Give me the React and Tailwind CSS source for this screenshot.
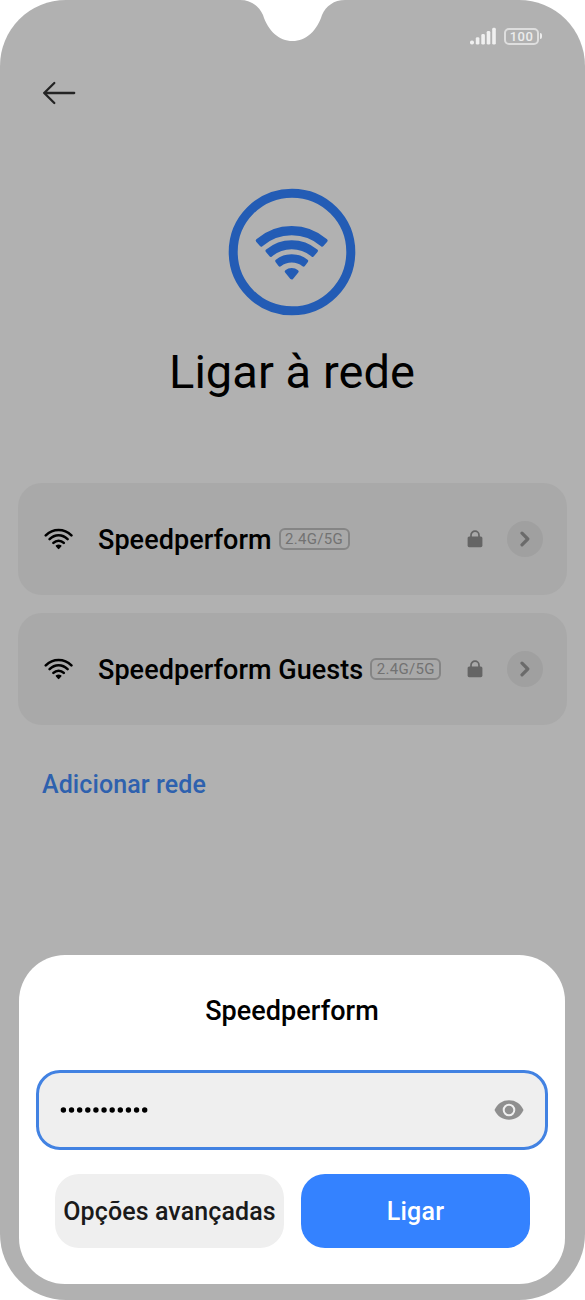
const networks = [
  { name: "Speedperform", band: "2.4G/5G" },
  { name: "Speedperform Guests", band: "2.4G/5G" },
];

// Ring sector opening upwards, symmetric around x = cx
function sector(cx, cy, inner, outer, degrees) {
  const a = (degrees * Math.PI) / 180;
  const s = Math.sin(a);
  const c = Math.cos(a);
  return `M${cx - outer * s} ${cy - outer * c}A${outer} ${outer} 0 0 1 ${cx + outer * s} ${cy - outer * c}L${cx + inner * s} ${cy - inner * c}A${inner} ${inner} 0 0 0 ${cx - inner * s} ${cy - inner * c}Z`;
}

function Notch() {
  return (
    <svg className="absolute top-0 left-[240px]" width="105" height="42" viewBox="0 0 105 42">
      <path
        d="M0 0C11 0 19 6 23 15C28 31 39 41 52.5 41S77 31 82 15C86 6 94 0 105 0Z"
        fill="#fff"
      />
    </svg>
  );
}

function StatusIcons() {
  return (
    <div className="flex items-center gap-2">
      <svg width="26" height="18" viewBox="0 0 26 18" fill="#f0f0f0">
        <rect x="0" y="13.4" width="4" height="4.2" rx="1.8" />
        <rect x="5.8" y="10.2" width="3.6" height="7.4" rx="1.4" />
        <rect x="11.3" y="7.1" width="3.6" height="10.5" rx="1.4" />
        <rect x="16.7" y="3.9" width="3.6" height="13.7" rx="1.4" />
        <rect x="22.2" y="0.8" width="3.6" height="16.8" rx="1.4" />
      </svg>
      <div className="flex items-center gap-px">
        <div className="flex h-[17px] w-[35px] items-center justify-center rounded-[5px] border-2 border-[#dedede] pt-px text-[13px] leading-none font-medium tracking-[0.5px] text-[#ececec]">
          100
        </div>
        <div className="h-[6px] w-[2px] rounded-r-full bg-[#ececec]" />
      </div>
    </div>
  );
}

function WifiBadge() {
  return (
    <svg width="128" height="128" viewBox="0 0 128 128">
      <circle cx="64" cy="64" r="58.8" fill="none" stroke="#235cb5" strokeWidth="9" />
      <g fill="#235cb5" stroke="#235cb5" strokeWidth="3.4" strokeLinejoin="round">
        <path d={sector(63.7, 92, 46.4, 52.2, 41)} />
        <path d={sector(63.7, 92, 32.5, 38.1, 40)} />
        <path d={sector(63.7, 92, 19.2, 24.1, 38)} />
        <path d={sector(63.7, 89.8, 0, 8.2, 40)} />
      </g>
    </svg>
  );
}

function WifiIcon() {
  return (
    <svg width="30" height="22" viewBox="0 0 30 22" fill="none" stroke="#000" strokeWidth="2.6" strokeLinecap="round">
      <path d="M1.8 7.4C9 0.2 20.2 0.2 27.4 7.4" />
      <path d="M5.6 11.2C10.8 6 18.4 6 23.6 11.2" />
      <path d="M9.4 14.9C12.4 12 16.8 12 19.8 14.9" />
      <path d="M12.6 18Q14.6 16.6 16.6 18L14.6 20.2Z" fill="#000" strokeWidth="1.8" strokeLinejoin="round" />
    </svg>
  );
}

function LockIcon() {
  return (
    <svg width="16" height="18" viewBox="0 0 16 18">
      <path d="M4 9V5.2a4 4 0 0 1 8 0V9" fill="none" stroke="#656565" strokeWidth="1.7" />
      <rect x="0.6" y="6.4" width="14.8" height="10.8" rx="1.6" fill="#656565" />
    </svg>
  );
}

function NetworkRow({ name, band }) {
  return (
    <div className="flex h-[112px] items-center rounded-3xl bg-[#a9a9a9] pr-[24px] pl-[26px]">
      <WifiIcon />
      <span className="ml-[24px] pt-[2px] text-[27px] leading-none font-medium tracking-[0.05px] text-black">{name}</span>
      <span className="mb-px ml-[7px] flex h-[22px] w-[71px] items-center justify-center rounded-md border-2 border-[#858585] pt-px text-[15px] leading-none tracking-[0.3px] text-[#727272]">
        {band}
      </span>
      <div className="ml-auto flex items-center gap-[24px]">
        <LockIcon />
        <span className="flex size-9 items-center justify-center rounded-full bg-[#a0a0a0]">
          <svg width="12" height="16" viewBox="0 0 12 16" fill="none" stroke="#6b6b6b" strokeWidth="3.2" strokeLinecap="round" strokeLinejoin="round">
            <path d="M3 2.2L8.8 8L3 13.8" />
          </svg>
        </span>
      </div>
    </div>
  );
}

function PasswordDialog() {
  return (
    <div className="ml-[19px] flex h-[329px] w-[546px] flex-col rounded-[46px] bg-white px-[17px]">
      <h2 className="mt-[40px] text-center text-[27px] leading-8 font-medium tracking-[0.05px] text-black">Speedperform</h2>
      <div className="mt-[43px] flex h-[80px] items-center justify-between rounded-3xl border-3 border-[#4282e2] bg-[#efefef] pr-[21px] pl-[21px]">
        <svg width="90" height="8" viewBox="0 0 90 8">
          {Array.from({ length: 11 }, (_, i) => (
            <circle key={i} cx={3.4 + i * 8.13} cy="4" r="2.7" />
          ))}
        </svg>
        <svg width="30" height="20" viewBox="0 0 30 20">
          <path d="M0.5 10C3.5 3.6 8.5 0.3 15 0.3S26.5 3.6 29.5 10C26.5 16.4 21.5 19.7 15 19.7S3.5 16.4 0.5 10Z" fill="#8f8f8f" />
          <circle cx="15" cy="10" r="5.3" fill="#8f8f8f" stroke="#efefef" strokeWidth="2" />
        </svg>
      </div>
      <div className="mt-6 flex gap-[17px] pl-[19px]">
        <button className="h-[74px] w-[229px] rounded-3xl bg-[#efefef] pt-[2px] text-[25px] font-medium tracking-[0.1px] whitespace-nowrap text-[#1a1a1a]">
          Opções avançadas
        </button>
        <button className="h-[74px] w-[229px] rounded-3xl bg-[#3482ff] pt-[2px] text-[25px] font-medium tracking-[0.2px] text-white">
          Ligar
        </button>
      </div>
    </div>
  );
}

export default function App() {
  return (
    <div className="h-[1300px] w-[585px] bg-white font-['Roboto',sans-serif]">
      <div className="relative flex h-full flex-col overflow-hidden rounded-[66px] bg-[#b1b1b1]">
        <Notch />
        <header className="flex h-[112px] flex-col pt-[27px] pr-[43px] pl-[42px]">
          <div className="flex h-[18px] justify-end">
            <StatusIcons />
          </div>
          <svg className="mt-[36px]" width="34" height="24" viewBox="0 0 34 24" fill="none" stroke="#242424" strokeWidth="2.3" strokeLinecap="round" strokeLinejoin="round">
            <path d="M32.2 12H2.2M12.3 2L2.2 12L12.3 22" />
          </svg>
        </header>
        <section className="mt-[76px] flex flex-col items-center pr-px">
          <WifiBadge />
          <h1 className="mt-[28px] text-[47px] leading-[56px] tracking-[0.05px] text-black">Ligar à rede</h1>
        </section>
        <div className="mt-[83px] flex flex-col gap-[18px] px-[18px]">
          {networks.map((network) => (
            <NetworkRow key={network.name} {...network} />
          ))}
        </div>
        <a className="mt-[44px] ml-[42px] text-[25px] leading-8 font-medium tracking-[0.1px] text-[#2e61ae]">Adicionar rede</a>
        <div className="mt-auto mb-4">
          <PasswordDialog />
        </div>
      </div>
    </div>
  );
}
